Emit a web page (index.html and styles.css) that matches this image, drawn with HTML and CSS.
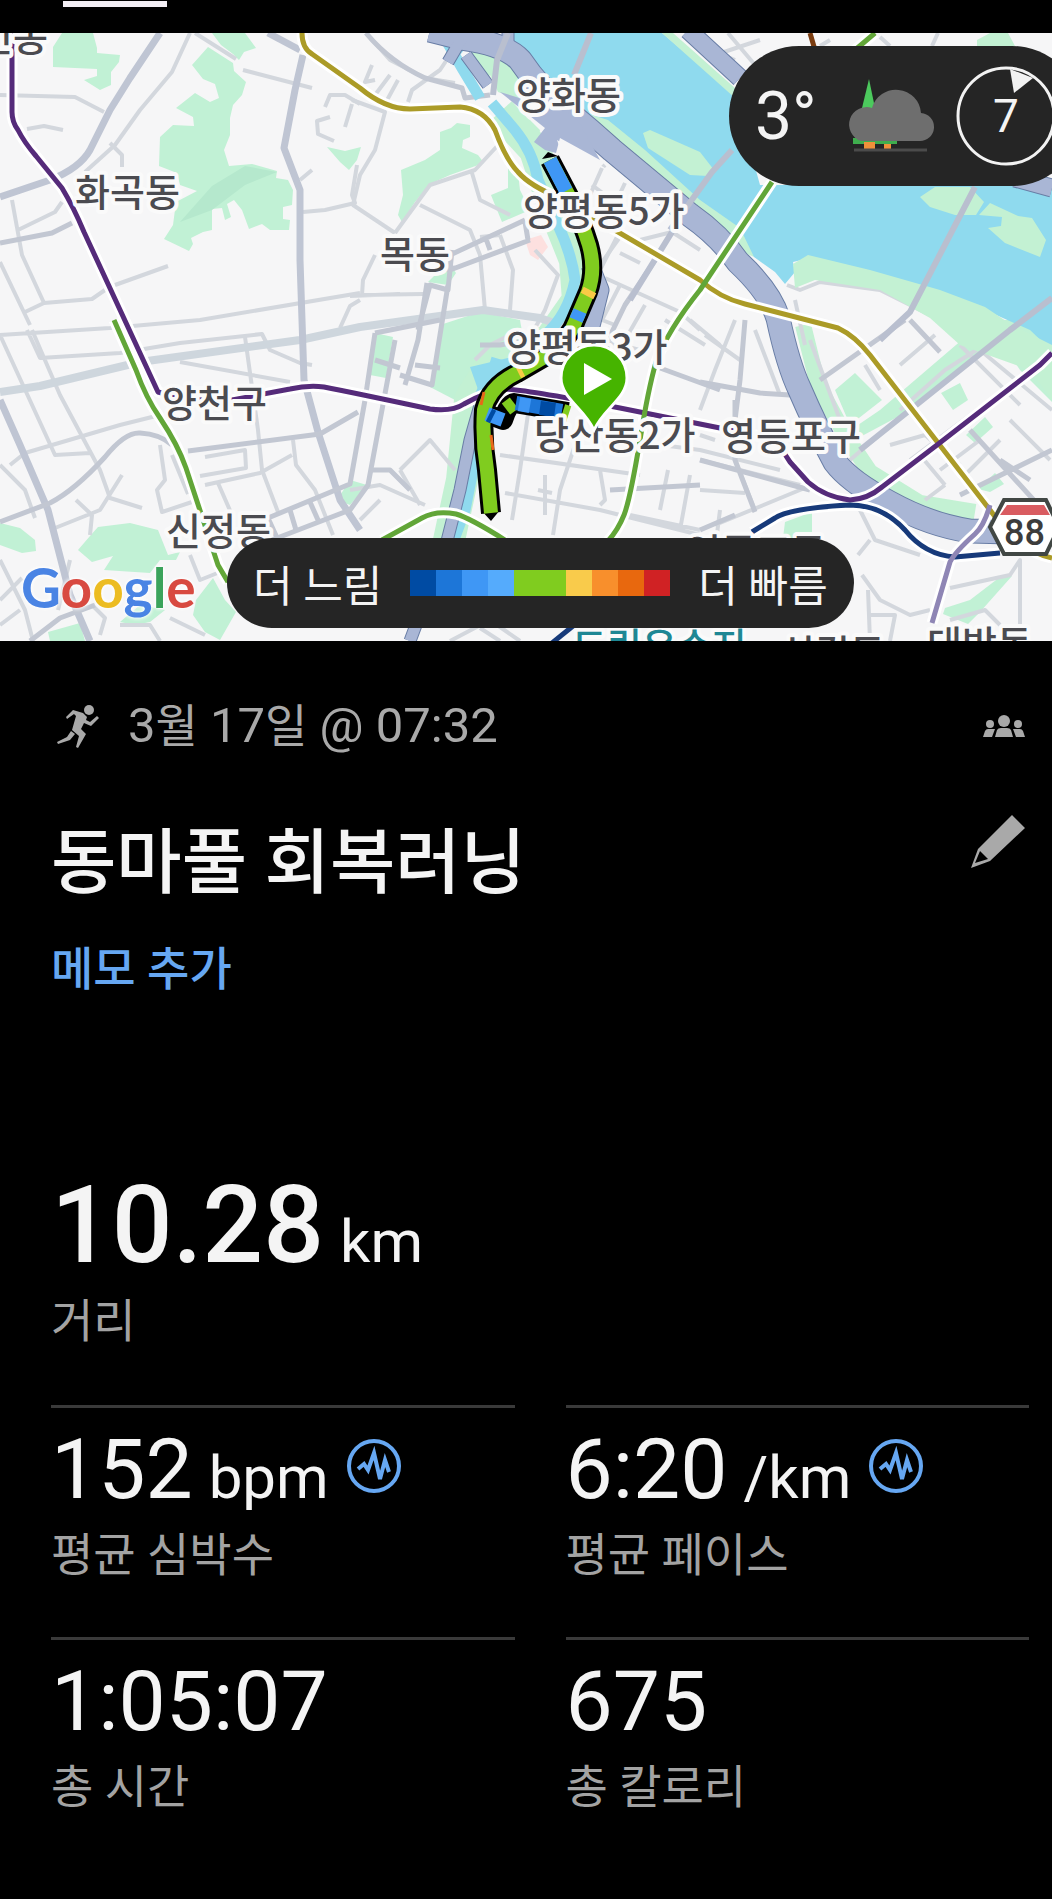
FILE: index.html
```html
<!DOCTYPE html>
<html lang="ko">
<head>
  <meta charset="UTF-8">
  <meta name="viewport" content="width=device-width, initial-scale=1">
  <title>동마풀 회복러닝</title>
  <link rel="stylesheet" href="styles.css">
</head>
<body>

  <div class="tab-bar"><div class="tab-indicator"></div></div>

  <section class="map">
    <svg class="map-canvas" viewBox="0 33 1052 608" role="img" aria-label="러닝 경로 지도">
      <defs>
        <path id="line-9" d="M302 33Q302 48 312 54L360 88Q385 109 410 109L460 107Q484 109 495 130Q506 160 518 172Q530 186 560 198L700 280Q720 298 745 304L838 328Q855 336 870 355L990 510Q1020 552 1052 558"/>
        <path id="line-5" d="M12 33V112Q12 122 18 130Q24 142 36 156L62 188Q74 208 84 232L158 392Q190 402 232 400L290 389Q308 385 324 387Q350 392 430 409Q452 412 464 404Q485 392 505 389Q530 390 620 408L700 424 760 436Q780 444 790 462L808 482Q825 497 850 500Q868 499 882 487L937 445 1040 365 1052 353"/>
        <path id="line-2" d="M114 320L136 370Q146 398 160 418Q178 445 186 468L218 565 228 582M772 182L700 290Q668 330 656 362Q648 390 640 440Q630 500 624 515Q618 530 608 541M382 540L422 518Q436 510 456 514Q470 518 505 540M875 33L855 50"/>
        <path id="line-1" d="M752 532L775 518Q790 508 850 505Q882 505 905 530Q925 555 955 557L1000 553"/>
        <path id="line-sillim" d="M990 505Q984 526 975 534Q955 552 950 562L932 623"/>
        <path id="riverside" d="M430 30L462 38Q505 44 520 60Q540 90 568 112Q590 130 612 150L690 215Q720 236 738 262Q770 292 778 318Q788 365 800 390Q815 425 835 462Q850 482 890 503Q930 525 970 531L1010 532"/>
        <path id="run" d="M550 160L570 198Q582 222 589 245Q596 270 588 292L576 320Q570 338 548 355L517 373Q490 386 484 410Q482 440 487 470L491 513"/>
        <path id="run-branch" d="M487 414L503 420Q508 404 514 403L568 412"/>
      </defs>

      <rect class="land" x="0" y="33" width="1052" height="608"/>

      <!-- parks -->
      <g class="park">
        <path d="M53 67V47L62 33H93L97 48V69ZM97 53L120 55 119 62 111 72V85L100 90 84 80 97 76Z"/>
        <path d="M212 33H245L256 48 244 52 239 60 233 54 221 45Z"/>
        <path d="M208 47L233 63 234 71 246 82 242 95 233 105 230 118V135L224 150 229 166 252 164 277 171 276 178 288 180 293 190 292 205 283 207V219L290 220 289 230H270L262 224 249 229 242 210 234 200 227 204 231 217 225 220 222 208 212 209V230L203 232 191 238 193 244 189 251 164 239 173 225 176 202 197 191 180 185 177 173 159 166 160 137 173 125 194 126 193 117 176 108 195 93 210 102 219 98 215 84 203 79 192 65Z"/>
        <path d="M327 147L345 151 361 147 357 160 349 170 340 162Z"/>
        <path d="M440 132L451 128 457 123 470 125V137L463 140 462 148 478 155 484 163 450 175 430 184 415 202 402 222 398 215 403 195 401 170 425 160 440 150Z"/>
        <path d="M508 155L517 165 520 190 530 210 502 222 495 205 491 195 508 188Z"/>
        <path d="M428 282L448 262 456 273 448 285ZM375 333L393 337 386 378 370 375ZM350 480L367 485 350 505 337 500Z"/>
        <path d="M440 325L480 312 520 320 523 337 515 370 483 392 455 400 430 387Z"/>
        <path d="M0 523L20 528 35 540 36 551 22 553 0 545Z"/>
        <path d="M90 536L98 527 130 523 158 530 168 555 180 552 176 560H160L150 573 104 570 113 556 92 562 78 550Z"/>
        <path d="M48 632L80 623 85 641H50ZM120 622L140 605 165 610 150 622 135 625ZM213 578L225 600 236 612 220 640 205 632 193 615 196 600Z"/>
        <path d="M835 390L855 373 882 400 850 425ZM970 333L992 340 920 405 860 437 858 425 880 410Z"/>
        <path d="M945 320H1030L1052 350V402L1020 370 1003 345 970 333ZM941 393L960 383 968 400 953 410ZM966 435L985 417 993 427 975 443ZM978 489L995 473 1004 484 990 492Z"/>
        <path d="M945 608L970 600 1000 577 1012 576 980 612 968 624 943 614ZM785 522L812 512V538H783Z"/>
      </g>
      <path class="park-shade" d="M245 166L277 172 245 185 212 210 180 222 212 186Z"/>
      <path d="M525 240L541 235 548 247 538 260 530 255Z" fill="#fde0df"/>

      <!-- stream banks -->
      <path class="bank" d="M500 112L535 150 553 205 575 260 578 300 550 340 495 360 470 400 462 480 448 545" stroke-width="32"/>
      <path class="bank" d="M803 325L818 385 845 435 870 472 920 503 975 512" stroke-width="16"/>

      <!-- streets -->
      <g class="street">
        <path d="M0 95L75 97 104 112M190 33L172 72 140 110 115 145 85 172M110 143L122 155V167M27 129L44 126 63 130M195 33L236 59M243 70L312 88M12 200L22 255 44 303 92 299 105 290M115 285L168 266M18 230L55 212 62 202M25 312L44 303M0 262L30 325"/>
        <path d="M0 335L110 328 200 320 360 293M27 330L40 358 120 353 180 343 262 334 270 350 300 363 312 365M10 465L25 453 120 425 160 415M32 330L60 395 100 470 110 498 142 508M0 335L55 455 90 453M180 362L290 382M205 457L245 450 246 468 200 476M205 485L260 473 292 455M245 337L258 430 262 470 278 512M160 445L165 480 157 490 162 512 192 502M172 455L188 494M293 440L296 465 315 490 333 535M55 528L100 510 122 475M0 465L25 490 35 518M76 500L92 515 90 535M218 483L232 515"/>
        <path d="M325 107L330 95 345 95 360 104M352 104L345 127M330 117L317 121 318 134 334 141M303 212L325 210 355 203 352 195 357 165M300 180L312 170M340 328L350 306 360 300M0 560L25 610 33 641M0 600L22 578M0 625L20 610M92 605L105 618 100 635M120 625L150 625 160 641M170 618L205 635M190 555L200 580 220 572M58 610L70 560"/>
        <path d="M366 33L390 60 425 78 455 83M408 102L412 90 440 70 450 55M372 65L365 82 375 80M390 75L375 95M398 80L386 102M352 100L385 112 375 150 360 175 353 205 395 233M420 205L470 230 480 255 485 310M395 233L430 185 475 170 500 143M472 173L480 200 510 215M375 255L363 280 362 295 423 294M350 296L400 294M500 235L513 270 510 310M500 235L480 237M535 250L558 275 545 310 535 328"/>
        <path d="M580 190L605 165M590 170L610 183M625 230L600 265M620 253L640 263M605 278L680 312 700 330M620 285L602 320 615 325M645 305L625 340M665 320L705 345M640 350L600 340M660 360L645 400M690 320L720 345M560 432L700 450 780 470M500 455L640 475M530 400L520 470 512 520M580 430L560 490 553 535M505 493L600 510 700 535M600 470L605 500 600 505M545 475L545 515M538 490L552 493M668 470L660 510M690 475L680 530M630 515L700 530M455 470L430 440 400 470M350 490L380 485 425 505M400 470L420 505M380 500L360 520M520 330L490 345 475 360"/>
        <path d="M735 320L715 370 700 410M705 335L740 360M755 330L780 395M700 460L800 485M735 460L755 510M700 490L745 493M715 525L812 485M720 510L715 550M865 365L880 390M935 335L900 365M885 430L850 460M920 455L945 485M900 410L945 370 1000 335M980 350L1052 410M960 345L1020 405M1000 440L960 480M1010 420L1050 460M890 445L925 435 960 465M910 460L990 400M940 470L980 440M860 510L875 540 920 555M870 540L858 555M862 575L880 600 910 615 930 610M868 590L870 641M870 615H895L890 641M950 588L1010 575 1020 560V635M700 435L715 440M925 500L945 485"/>
        <path d="M700 45L735 60M715 55L760 40M728 33L755 65M820 46L830 40M880 37L890 46M932 46L938 33M787 285L800 290 820 282 880 290 930 315M795 300L805 345M810 340L840 420M815 430L845 470 870 495M950 620L985 610 1000 625M450 641L490 620 520 641M480 628L500 641"/>
      </g>
      <g class="avenue">
        <path d="M0 392L40 386 140 362 300 340 360 327 483 310 540 318 565 327" class="pale"/>
        <path d="M160 33L130 78 110 110 90 150Q80 168 50 180L0 197"/>
        <path d="M303 55L295 90 284 148 300 190V260L304 380 318 432 340 500 360 530"/>
        <path d="M268 33L300 50"/>
        <path d="M0 400L20 445 48 510 70 595 90 641"/>
      </g>
      <g class="road">
        <path d="M0 522L50 503Q75 490 105 457Q125 432 140 433 160 434 172 445M188 451L320 434 358 412M268 518L350 484 365 400 375 333M272 540L350 510 368 485 395 340M268 518L278 540M290 510L296 530M310 502L318 520M0 243L52 233 72 223M30 641L60 618 95 605"/>
        <path d="M450 255L525 220M450 270L530 240M452 250L448 290 430 285 418 330M485 236L490 250M525 222L528 240M427 283L418 340 405 385M448 285L432 385 400 375M375 360L400 368M415 365L440 368M440 270L455 268M470 470L480 440M372 470L390 470 410 490M375 333L440 320M480 345L500 345 530 340"/>
        <path d="M366 33Q390 62 425 78L462 88 465 98 490 95M672 235L625 305 608 340M660 368L720 390M610 490L700 485M745 320L740 380 735 420M700 530L735 515M905 320L820 380M910 320L940 352M970 430L1052 520M960 495L1052 450M1000 460L1030 480"/>
        <path d="M700 382L760 393 790 395 805 388M700 460L810 490M735 400L735 460 755 512"/>
      </g>

      <!-- Han river -->
      <path class="water" d="M508 33H662L735 95 760 185H1052V351L1030 330 985 310 940 292 870 274 810 258 793 262 795 272 785 284 775 272 754 257 740 240 700 210 645 172 585 118 520 62Z"/>
      <path class="water" d="M436 33L455 55 472 90 485 98 477 88 460 55 468 45 450 33Z"/>
      <g class="bank-fill">
        <path d="M582 112L608 120 645 150 700 200 740 228 754 257 700 232 600 155Z"/>
        <path d="M643 133L650 130 700 152 714 170 708 176 690 175 648 148Z"/>
        <path d="M920 197L935 187H970L984 202 976 215 955 215 930 207ZM979 215L990 203 1018 216 1032 218 1046 240 1040 257 1005 243 988 228 1001 226 1002 217Z"/>
        <path d="M793 264L808 255 870 270 940 290 985 307 1012 325 1052 345V400L1030 370 960 345 930 318 880 290 815 280 795 288Z"/>
        <path d="M662 33H673L735 88V98Z"/>
        <path d="M468 45L498 50 537 85 548 105 520 100 498 92 490 75 485 80ZM492 103L530 120 540 130 536 150 525 145Z"/>
        <path d="M977 40L990 33H1008L1015 46H977Z"/>
      </g>
      <path class="stream" d="M442 33L462 68 480 98"/>
      <path class="stream" d="M492 103L515 130Q533 152 538 180L558 225Q572 255 575 280 568 315 545 335"/>
      <path class="stream" d="M478 400L490 375 500 365 490 362M480 415L473 470 465 510 452 545"/>
      <path class="water" d="M470 367L520 355 512 380 480 395Z"/>

      <!-- expressways -->
      <g class="express-edge">
        <use href="#riverside"/>
        <path class="slim" d="M462 38L448 62M466 55L488 85M508 33V50M480 405L470 440 460 490 446 545 410 641"/>
        <path class="mid" d="M688 30L740 78M1015 178L1052 188M590 265L600 290 590 330"/>
      </g>
      <g class="express">
        <use href="#riverside"/>
        <path class="slim" d="M462 38L448 62M466 55L488 85M508 33V50M480 405L470 440 460 490 446 545 410 641"/>
        <path class="mid" d="M688 30L740 78M1015 178L1052 188M590 265L600 290 590 330"/>
      </g>
      <path d="M500 92L545 128 534 142 545 150 556 153 560 138 600 160 575 115Z" fill="#a9b6d5"/>
      <path class="land" d="M557 140L605 168 650 198 690 238 700 260 640 255 580 205Z"/>
      <g class="street">
        <path d="M602 168L590 195M592 185L612 200M625 183L605 225M640 240L672 232 700 250M618 235L600 270"/>
      </g>
      <path class="bridge" d="M591 33L574 75M732 150L712 172 670 230M975 187L910 312 880 340M1052 298L1010 330 860 450M493 95L497 60 508 33M672 232L630 300"/>

      <!-- subway lines -->
      <g class="halo">
        <use href="#line-9"/>
        <use href="#line-5"/>
        <use href="#line-2"/>
        <use href="#line-1"/>
        <use href="#line-sillim"/>
      </g>
      <g class="subway">
        <use href="#line-9" stroke="#ab9b27"/>
        <use href="#line-5" stroke="#552b7a"/>
        <use href="#line-2" stroke="#62a638"/>
        <use href="#line-1" stroke="#173a7a"/>
        <use href="#line-sillim" stroke="#8f86b5"/>
        <path stroke="#173a7a" d="M552 643L573 626"/>
        <path stroke="#7a3c10" d="M810 33L815 50"/>
      </g>

      <!-- run track -->
      <g>
        <use href="#run" class="track-edge"/>
        <use href="#run-branch" class="track-edge"/>
        <path d="M481 510L491 521 500 510ZM542 159L548 152 558 156Z"/>
        <use href="#run" class="pace" stroke="#80cc1f"/>
        <path class="pace" stroke="#3f97f5" d="M550 160L566 191M580 311L576 320M487 414L503 420"/>
        <path class="pace" stroke="#f9ca45" d="M590 290L587 296M522 370L518 372"/>
        <path class="pace" stroke="#80cc1f" d="M506 409L514 403"/>
        <path class="pace" stroke="#1d76d8" d="M516 403L562 411"/>
        <path class="pace" stroke="#3f97f5" d="M519 404L530 406"/>
        <path class="pace" stroke="#004ba3" d="M540 408L555 410M489 415L493 417"/>
        <path class="pace" stroke="#80cc1f" d="M563 411L569 413"/>
        <path d="M491 435L493 450M481 405L484 392" stroke="#e8681a" stroke-width="3"/>
      </g>

      <!-- place names -->
      <g class="place">
        <text x="-22" y="51">인동</text>
        <text x="75" y="206">화곡동</text>
        <text x="516" y="109">양화동</text>
        <text x="523" y="225">양평동5가</text>
        <text x="380" y="268">목동</text>
        <text x="506" y="361">양평동3가</text>
        <text x="534" y="449">당산동2가</text>
        <text x="162" y="417">양천구</text>
        <text x="166" y="545">신정동</text>
        <text x="721" y="450">영등포구</text>
        <text x="686" y="566">영등포동</text>
        <text x="780" y="667">신길동</text>
        <text x="927" y="658">대방동</text>
        <text x="572" y="660" class="teal">드림유수지</text>
      </g>

      <!-- route 88 shield -->
      <path d="M1004 500H1046L1059 527 1046 554H1004L990 527Z" fill="#fff" stroke="#414744" stroke-width="4"/>
      <path d="M1007 505H1044L1050 515H1000Z" fill="#d95c61"/>
      <text x="1004" y="545" class="shield-number">88</text>

      <!-- start pin -->
      <path d="M594 430C584 408 561 398 561 378A33 33 0 0 1 627 378C627 398 604 408 594 430Z" fill="#46b400" stroke="#fff" stroke-width="3"/>
      <path d="M584 363V395L612 379Z" fill="#fff"/>
    </svg>

    <div class="weather">
      <span class="temperature">3°</span>
      <svg class="cloud" viewBox="0 0 90 76" role="img" aria-label="흐림">
        <path d="M17 30L24 1 30 30Z" fill="#4cc95d"/>
        <path d="M8 60H52V66H8Z" fill="#3fae4e"/>
        <path d="M19 64H30V71H19ZM39 66H46V71H39Z" fill="#f0913a"/>
        <path d="M16 63A17 17 0 0 1 27 30A25 25 0 0 1 76 35A14 14 0 0 1 74 63Z" fill="#6e6e6e"/>
        <path d="M9 72H82" stroke="#4b4b4b" stroke-width="3"/>
      </svg>
      <div class="wind">
        <svg class="wind-ring" viewBox="0 0 100 100" aria-hidden="true">
          <circle cx="50" cy="50" r="48" fill="none" stroke="#f2f2f2" stroke-width="3"/>
          <path d="M54 3L77 12 58 27Z" fill="#f2f2f2"/>
        </svg>
        <span class="wind-speed">7</span>
      </div>
    </div>

    <a class="google" href="#" aria-label="Google"><span class="g-blue">G</span><span class="g-red">o</span><span class="g-yellow">o</span><span class="g-blue">g</span><span class="g-green">l</span><span class="g-red">e</span></a>

    <div class="legend">
      <span>더 느림</span>
      <div class="scale">
        <i class="pace-1"></i><i class="pace-2"></i><i class="pace-3"></i><i class="pace-4"></i><i class="pace-5"></i><i class="pace-5"></i><i class="pace-6"></i><i class="pace-7"></i><i class="pace-8"></i><i class="pace-9"></i>
      </div>
      <span>더 빠름</span>
    </div>
  </section>

  <main class="activity">
    <div class="meta">
      <svg class="runner" viewBox="0 0 42 44" aria-hidden="true">
        <circle cx="32" cy="6" r="5"/>
        <path d="M10 15L9 13 16 6 26 9 30 13 29 16 33 18 40 12 42 14 34 22 27 19 24 25 29 30 21 44 19 43 22 32 15 26 19 12 17 10Z"/>
        <path d="M14 27L18 30 13 36 1 40 0 38 10 33Z"/>
      </svg>
      <time class="date">3<span class="hangul">월</span> 17<span class="hangul">일</span> @ 07:32</time>
      <button class="icon-button" type="button" aria-label="공개 범위">
        <svg class="people" viewBox="0 0 42 22">
          <circle cx="21" cy="6" r="6"/><circle cx="7" cy="9" r="4"/><circle cx="35" cy="9" r="4"/>
          <path d="M12 22L14 15Q15 13 18 13H24Q27 13 28 15L30 22ZM0 22L2 16Q3 14 5 14H12L9 22ZM42 22L40 16Q39 14 37 14H30L33 22Z"/>
        </svg>
      </button>
    </div>

    <div class="heading">
      <h1>동마풀 회복러닝</h1>
      <button class="icon-button" type="button" aria-label="제목 편집">
        <svg class="pencil" viewBox="0 0 54 54">
          <path fill-rule="evenodd" d="M41 1L54 14 19 47 0 54 7 35ZM9 37L4 49 17 45Z"/>
        </svg>
      </button>
    </div>

    <a class="memo" href="#">메모 추가</a>

    <div class="distance">
      <p class="value total">10.28<span class="unit">km</span></p>
      <p class="label">거리</p>
    </div>

    <div class="stats">
      <div class="stat">
        <p class="value">152<span class="unit">bpm</span>
          <button class="icon-button" type="button" aria-label="심박수 그래프">
            <svg class="pulse" viewBox="0 0 54 54"><circle cx="27" cy="27" r="25"/><path d="M11 30L17 25 21 31 27 14 33 40 38 21 42 33"/></svg>
          </button>
        </p>
        <p class="label">평균 심박수</p>
      </div>
      <div class="stat">
        <p class="value">6:20<span class="unit">/km</span>
          <button class="icon-button" type="button" aria-label="페이스 그래프">
            <svg class="pulse" viewBox="0 0 54 54"><circle cx="27" cy="27" r="25"/><path d="M11 30L17 25 21 31 27 14 33 40 38 21 42 33"/></svg>
          </button>
        </p>
        <p class="label">평균 페이스</p>
      </div>
      <div class="stat">
        <p class="value">1:05:07</p>
        <p class="label">총 시간</p>
      </div>
      <div class="stat">
        <p class="value">675</p>
        <p class="label">총 칼로리</p>
      </div>
    </div>
  </main>

</body>
</html>
```
FILE: styles.css
```css
* {
  box-sizing: border-box;
}

body {
  margin: 0;
  background: #000;
  color: #f4f4f4;
  font-family: Roboto, "Noto Sans CJK KR", sans-serif;
}

h1, p {
  margin: 0;
}

.tab-bar {
  height: 33px;
  padding: 1px 63px;
}

.tab-indicator {
  width: 104px;
  height: 6px;
  background: #f3eff5;
}

/* map */
.map {
  position: relative;
  overflow: hidden;
}

.map-canvas {
  display: block;
  width: 100%;
  height: auto;
}

.land { fill: #f6f6f7; }
.park { fill: #c1f1d5; }
.park-shade { fill: #b5e8cd; }
.water { fill: #8fdaee; }
.bank-fill { fill: #c3f1d3; }

.bank, .stream, .street, .avenue, .road, .bridge,
.express, .express-edge, .halo, .subway, .track-edge, .pace {
  fill: none;
  stroke-linejoin: round;
}

.bank { stroke: #c3f1d3; }
.stream { stroke: #8fdaee; stroke-width: 11px; }
.street { stroke: #d3d7dd; stroke-width: 4px; }
.road { stroke: #c2c7d2; stroke-width: 5px; }
.avenue { stroke: #bfc5d3; stroke-width: 7px; }
.avenue .pale { stroke: #ced6dd; stroke-width: 8px; }
.bridge { stroke: #b9bfcf; stroke-width: 6px; }
.express { stroke: #a9b6d5; stroke-width: 23px; }
.express-edge { stroke: #687da5; stroke-width: 25px; }
.express .slim { stroke-width: 11px; }
.express-edge .slim { stroke-width: 13px; }
.express .mid { stroke-width: 17px; }
.express-edge .mid { stroke-width: 19px; }
.halo { stroke: #fff; stroke-width: 11px; }
.subway { stroke-width: 5px; }
.track-edge { stroke: #000; stroke-width: 20px; }
.pace { stroke-width: 14px; }

.place {
  font-family: "Noto Sans CJK KR", sans-serif;
  font-size: 38px;
  font-weight: 500;
  fill: #4b4b50;
  stroke: #fafafa;
  stroke-width: 8px;
  stroke-linejoin: round;
  paint-order: stroke;
}

.place .teal { fill: #1e8794; }

.shield-number {
  font-size: 36px;
  font-weight: 500;
  fill: #3c3c3c;
}

.weather {
  position: absolute;
  top: 13px;
  right: -30px;
  display: flex;
  align-items: center;
  height: 140px;
  padding: 0 26px;
  border-radius: 70px;
  background: #252525;
}

.temperature {
  width: 90px;
  font-size: 66px;
}

.cloud {
  width: 90px;
  height: 76px;
}

.wind {
  display: grid;
  place-items: center;
  width: 100px;
  height: 100px;
  margin-left: 21px;
}

.wind-ring, .wind-speed {
  grid-area: 1 / 1;
}

.wind-speed {
  font-size: 46px;
}

.google {
  position: absolute;
  left: 21px;
  bottom: 20px;
  font-family: Lato, sans-serif;
  font-size: 55px;
  font-weight: 700;
  line-height: 68px;
  text-decoration: none;
  text-shadow: 0 0 4px #fff, 0 0 4px #fff;
}

.g-blue { color: #4a84e4; }
.g-red { color: #d84a41; }
.g-yellow { color: #ecbc22; }
.g-green { color: #3ba35b; }

.legend {
  position: absolute;
  left: 227px;
  bottom: 13px;
  display: flex;
  align-items: center;
  gap: 28px;
  height: 90px;
  padding: 0 26px;
  border-radius: 45px;
  background: #252525;
  font-size: 43px;
  white-space: nowrap;
}

.scale {
  display: flex;
}

.scale i {
  width: 26px;
  height: 26px;
}

.pace-1 { background: #004ba3; }
.pace-2 { background: #1d76d8; }
.pace-3 { background: #3f97f5; }
.pace-4 { background: #55abfc; }
.pace-5 { background: #80cc1f; }
.pace-6 { background: #f9cb4b; }
.pace-7 { background: #f88f2c; }
.pace-8 { background: #e8680e; }
.pace-9 { background: #d02224; }

/* activity details */
.activity {
  padding: 55px 23px 40px 51px;
}

.icon-button {
  padding: 0;
  border: 0;
  background: none;
  line-height: 0;
}

.meta {
  display: flex;
  align-items: center;
  padding: 0 4px 0 6px;
  color: #a9a9a9;
}

.runner {
  width: 42px;
  height: 44px;
  fill: #a9a9a9;
}

.date {
  flex: 1;
  margin-left: 29px;
  font-size: 49px;
  line-height: 60px;
}

.date .hangul {
  font-size: 46px;
}

.people {
  width: 42px;
  height: 22px;
  fill: #a9a9a9;
}

.heading {
  display: flex;
  justify-content: space-between;
  align-items: flex-start;
  margin-top: 58px;
  padding-right: 4px;
}

h1 {
  font-size: 71px;
  font-weight: 500;
  line-height: 98px;
}

.pencil {
  width: 54px;
  height: 54px;
  fill: #a9a9a9;
}

.memo {
  display: block;
  margin-top: 29px;
  color: #66a7f2;
  font-size: 46px;
  font-weight: 500;
  line-height: 56px;
  text-decoration: none;
}

.distance {
  margin-top: 169px;
  padding-bottom: 56px;
}

.value {
  font-size: 84px;
  line-height: 100px;
  white-space: nowrap;
}

.total {
  font-size: 107px;
  font-weight: 500;
  line-height: 120px;
}

.unit {
  margin-left: 16px;
  font-size: 60px;
  font-weight: 400;
  line-height: 60px;
}

.label {
  margin-top: 7px;
  color: #a3a3a3;
  font-size: 46px;
  line-height: 56px;
}

.stats {
  display: grid;
  grid-template-columns: 1fr 1fr;
  column-gap: 51px;
}

.stat {
  padding: 12px 0 54px;
  border-top: 3px solid #3a3a3a;
}

.stat .value {
  display: flex;
  align-items: baseline;
}

.stat .icon-button {
  align-self: flex-start;
  margin: 19px 0 0 18px;
}

.pulse {
  width: 54px;
  height: 54px;
  fill: none;
  stroke: #66a7f2;
  stroke-width: 4px;
}
```
